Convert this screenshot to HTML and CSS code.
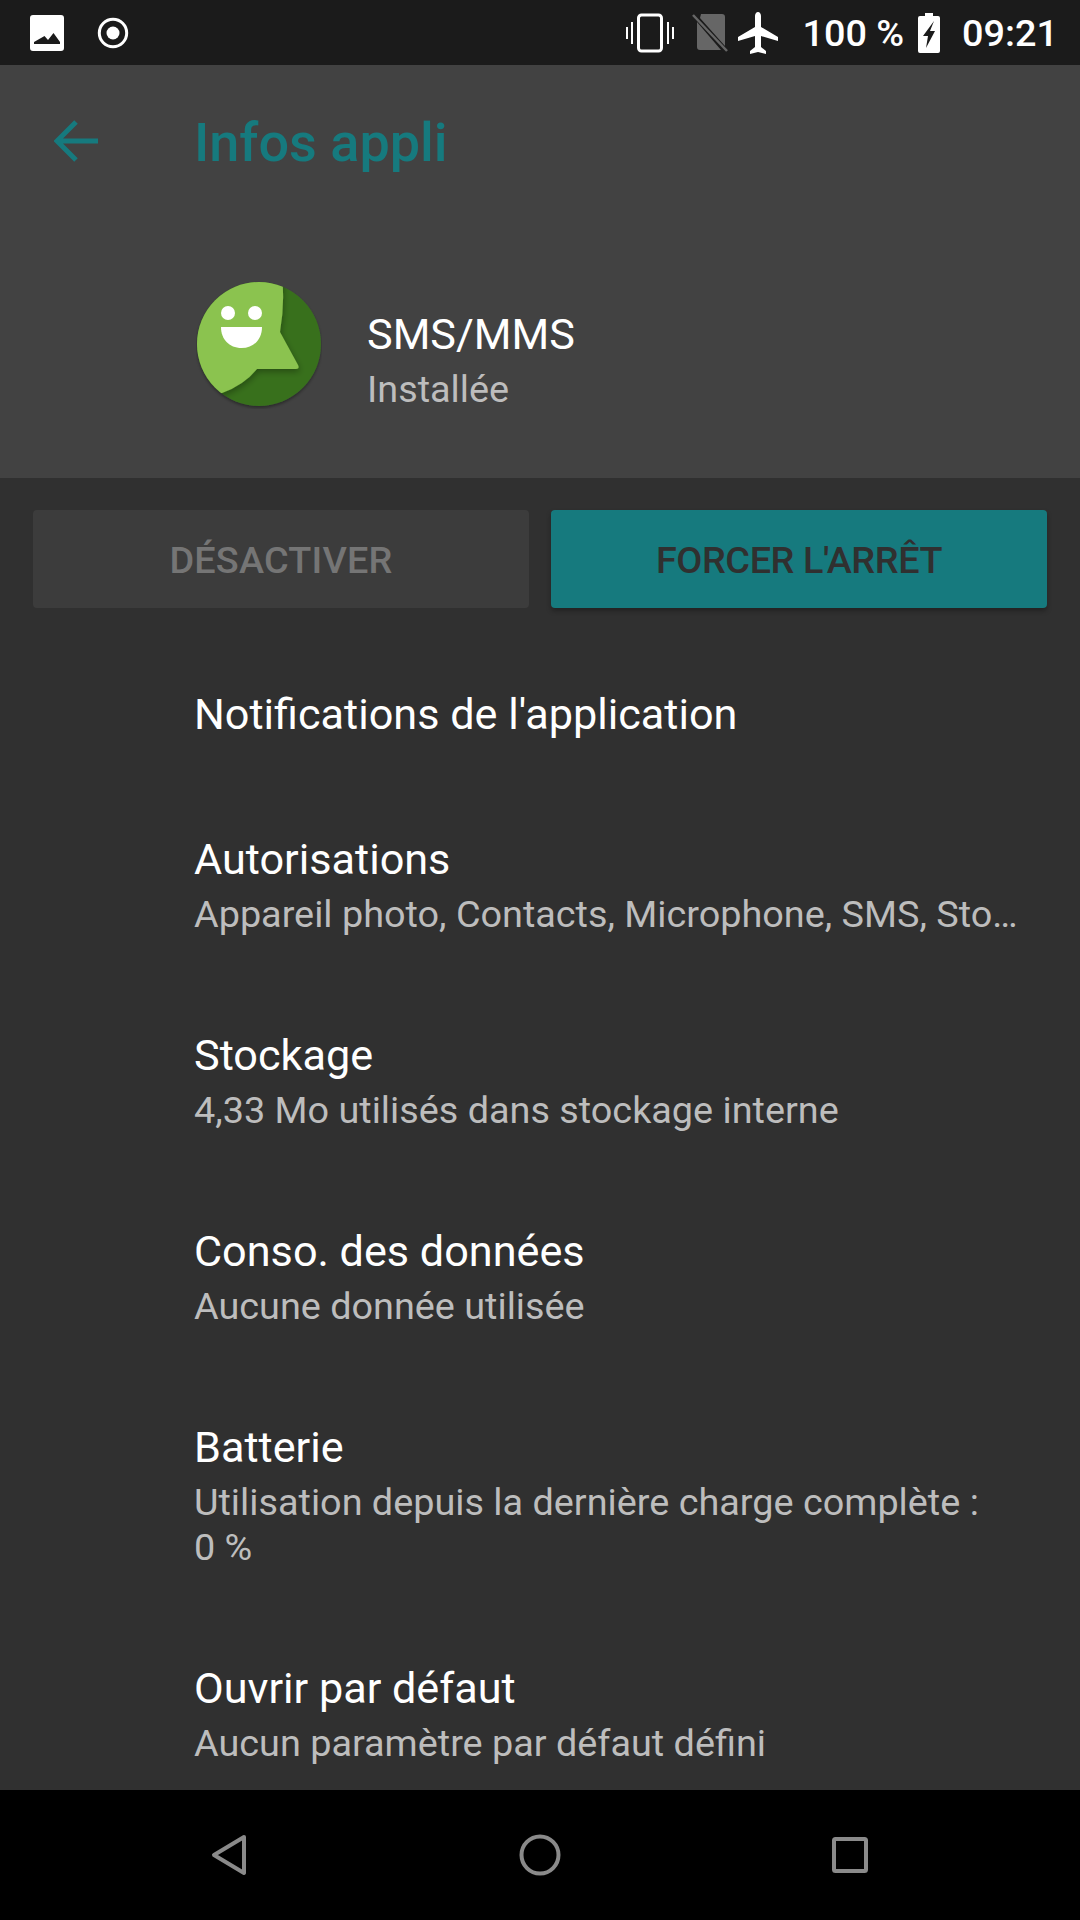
FILE: index.html
```html
<!DOCTYPE html>
<html lang="fr">
<head>
<meta charset="UTF-8">
<title>Infos appli</title>
<link rel="stylesheet" href="styles.css">
</head>
<body>
<div class="screen">
    <div class="status-bar">
        <div class="status-left">
            <svg class="ic-picture" viewBox="0 0 34 36"><path fill="#fff" fill-rule="evenodd" d="M3 0h28a3 3 0 0 1 3 3v30a3 3 0 0 1-3 3H3a3 3 0 0 1-3-3V3a3 3 0 0 1 3-3zM4 29h26v-2l-6.500-9-5.500 7-3.500-4L4 27z"/></svg>
            <svg class="ic-record" viewBox="0 0 32 32"><circle cx="16" cy="16" r="13.700" fill="none" stroke="#fff" stroke-width="3"/><circle cx="16" cy="16" r="6.500" fill="#fff"/></svg>
        </div>
        <div class="status-right">
            <svg class="ic-vibrate" viewBox="0 0 48 40"><rect x="12.500" y="2" width="23" height="36" rx="3" fill="none" stroke="#fff" stroke-width="3"/><path d="M6 9v22M1 14v12M42 9v22M47 14v12" stroke="#fff" stroke-width="2" fill="none"/></svg>
            <svg class="ic-nosim" viewBox="0 0 36 40"><path fill="#666" d="M9 1h21a3 3 0 0 1 3 3v29L8 5zM5 9l24 28H8a3 3 0 0 1-3-3z"/><path d="M1 2l34 36" stroke="#666" stroke-width="2.500" fill="none"/></svg>
            <svg class="ic-plane" viewBox="0 0 40 42"><path fill="#fff" d="M20 0c1.800 0 3 2 3 4v11l17 10v4l-17-5v11l5 4v3l-8-2-8 2v-3l5-4V24L0 29v-4l17-10V4c0-2 1.200-4 3-4z"/></svg>
            <span class="status-text battery-pct">100 %</span>
            <svg class="ic-battery" viewBox="0 0 22 40"><path fill="#fff" fill-rule="evenodd" d="M7 0h8v3h5a2 2 0 0 1 2 2v33a2 2 0 0 1-2 2H2a2 2 0 0 1-2-2V5a2 2 0 0 1 2-2h5zM16 8L5 23h5l-2 12 9-17h-5z"/></svg>
            <span class="status-text clock">09:21</span>
        </div>
    </div>

    <div class="app-header">
        <div class="toolbar">
            <svg class="ic-back" viewBox="0 0 44 44"><path d="M44 22H5M22 3L3 22l19 19" fill="none" stroke="#167a7e" stroke-width="5"/></svg>
            <span class="toolbar-title">Infos appli</span>
        </div>
        <div class="app-info">
            <svg class="app-icon" viewBox="0 0 126 128">
                <defs>
                    <filter id="sh" x="-20%" y="-20%" width="140%" height="140%"><feDropShadow dx="0" dy="2" stdDeviation="1.500" flood-color="#000" flood-opacity=".35"/></filter>
                    <filter id="sh2" x="-20%" y="-20%" width="140%" height="140%"><feDropShadow dx="1" dy="3" stdDeviation="3" flood-color="#000" flood-opacity=".3"/></filter>
                    <clipPath id="round"><circle cx="63" cy="63" r="62"/></clipPath>
                </defs>
                <circle cx="63" cy="63" r="62" fill="#38701f" filter="url(#sh)"/>
                <g clip-path="url(#round)">
                    <path fill="#8bc34f" filter="url(#sh2)" d="M0-4h86q3 26-2 55l18 33q2 4-2 4H61Q48 104 26 112H0z"/>
                </g>
                <circle cx="32" cy="32" r="7" fill="#fff"/>
                <circle cx="59" cy="32" r="7" fill="#fff"/>
                <path fill="#fff" d="M25 46h41c0 12-8 21-20.500 21S25 58 25 46z"/>
            </svg>
            <div class="app-text">
                <div class="app-name">SMS/MMS</div>
                <div class="app-state">Installée</div>
            </div>
        </div>
    </div>

    <div class="content">
        <div class="actions">
            <div class="btn btn-off">DÉSACTIVER</div>
            <div class="btn btn-on">FORCER L'ARRÊT</div>
        </div>
        <div class="row row-single">
            <div class="row-title">Notifications de l'application</div>
        </div>
        <div class="row">
            <div class="row-title">Autorisations</div>
            <div class="row-sub">Appareil photo, Contacts, Microphone, SMS, Sto…</div>
        </div>
        <div class="row">
            <div class="row-title">Stockage</div>
            <div class="row-sub">4,33 Mo utilisés dans stockage interne</div>
        </div>
        <div class="row">
            <div class="row-title">Conso. des données</div>
            <div class="row-sub">Aucune donnée utilisée</div>
        </div>
        <div class="row">
            <div class="row-title">Batterie</div>
            <div class="row-sub">Utilisation depuis la dernière charge complète :<br>0 %</div>
        </div>
        <div class="row">
            <div class="row-title">Ouvrir par défaut</div>
            <div class="row-sub">Aucun paramètre par défaut défini</div>
        </div>
    </div>

    <div class="nav-bar">
        <svg class="ic-nav-back" viewBox="0 0 36 42"><path d="M33 3L3 21l30 18z" fill="none" stroke="#8a8a8a" stroke-width="4" stroke-linejoin="round"/></svg>
        <svg class="ic-nav-home" viewBox="0 0 42 42"><circle cx="21" cy="21" r="18.500" fill="none" stroke="#8a8a8a" stroke-width="4"/></svg>
        <svg class="ic-nav-recent" viewBox="0 0 36 36"><rect x="2" y="2" width="32" height="32" rx="1.500" fill="none" stroke="#8a8a8a" stroke-width="4"/></svg>
    </div>
</div>
</body>
</html>
```

FILE: styles.css
```css
*{
    box-sizing: border-box;
}
html, body{
    margin: 0;
    padding: 0;
}
body{
    font-family: Roboto, "Liberation Sans", sans-serif;
    background-color: #303030;
}
.screen{
    width: 1080px;
    height: 1920px;
    display: flex;
    flex-direction: column;
    overflow: hidden;
}

/* status bar */
.status-bar{
    height: 65px;
    background-color: #1b1b1b;
    display: flex;
    justify-content: space-between;
    align-items: center;
    padding: 0 22px 0 30px;
    flex-shrink: 0;
}
.status-left, .status-right{
    display: flex;
    align-items: center;
}
.status-text{
    color: #fff;
    font-size: 37.800px;
    font-weight: 500;
}
.ic-picture{ width: 34px; height: 36px; }
.ic-record{ width: 32px; height: 32px; margin-left: 33px; }
.ic-vibrate{ width: 48px; height: 40px; }
.ic-nosim{ width: 36px; height: 40px; margin-left: 18px; }
.ic-plane{ width: 40px; height: 42px; margin-left: 10px; }
.battery-pct{ margin-left: 24px; }
.ic-battery{ width: 22px; height: 40px; margin-left: 14px; }
.clock{ margin-left: 22px; }

/* header */
.app-header{
    height: 413px;
    background-color: #424242;
    flex-shrink: 0;
}
.toolbar{
    height: 147px;
    display: flex;
    align-items: center;
    padding: 8px 0 0 54px;
}
.ic-back{
    width: 44px;
    height: 44px;
    margin-bottom: 4px;
}
.toolbar-title{
    margin-left: 96px;
    color: #167a7e;
    font-size: 54px;
    font-weight: 500;
}
.app-info{
    display: flex;
    align-items: flex-start;
    padding: 69px 0 0 196px;
}
.app-icon{
    width: 126px;
    height: 128px;
    flex-shrink: 0;
}
.app-name{
    color: #fff;
    font-size: 43.200px;
    line-height: 56px;
}
.app-state{
    color: #bdbdbd;
    font-size: 37.800px;
    line-height: 52px;
}
.app-text{
    margin-left: 45px;
    padding-top: 26px;
}

/* content */
.content{
    flex: 1;
    min-height: 0;
    overflow: hidden;
    background-color: #303030;
}
.actions{
    display: flex;
    gap: 22px;
    padding: 32px 33px 34px;
}
.btn{
    flex: 1;
    height: 98px;
    border-radius: 4px;
    display: flex;
    align-items: center;
    justify-content: center;
    padding-top: 2px;
    font-size: 37.800px;
    font-weight: 500;
}
.btn-off{
    background-color: #3c3c3c;
    color: #757575;
    letter-spacing: .2px;
}
.btn-on{
    background-color: #167a7e;
    color: #303030;
    letter-spacing: -.4px;
    box-shadow: 0 3px 5px rgba(0,0,0,.3);
}
.row{
    padding: 45px 46px 46px 194px;
}
.row-single{
    padding-bottom: 44px;
}
.row-title{
    color: #fff;
    font-size: 43.200px;
    line-height: 56px;
}
.row-sub{
    color: #bdbdbd;
    font-size: 37.800px;
    line-height: 45px;
    margin-top: 4px;
}

/* nav bar */
.nav-bar{
    height: 130px;
    background-color: #000;
    flex-shrink: 0;
    display: flex;
    align-items: center;
    justify-content: space-between;
    padding: 0 212px 0 211px;
}
.ic-nav-back{ width: 36px; height: 42px; }
.ic-nav-home{ width: 42px; height: 42px; }
.ic-nav-recent{ width: 36px; height: 36px; }
```
